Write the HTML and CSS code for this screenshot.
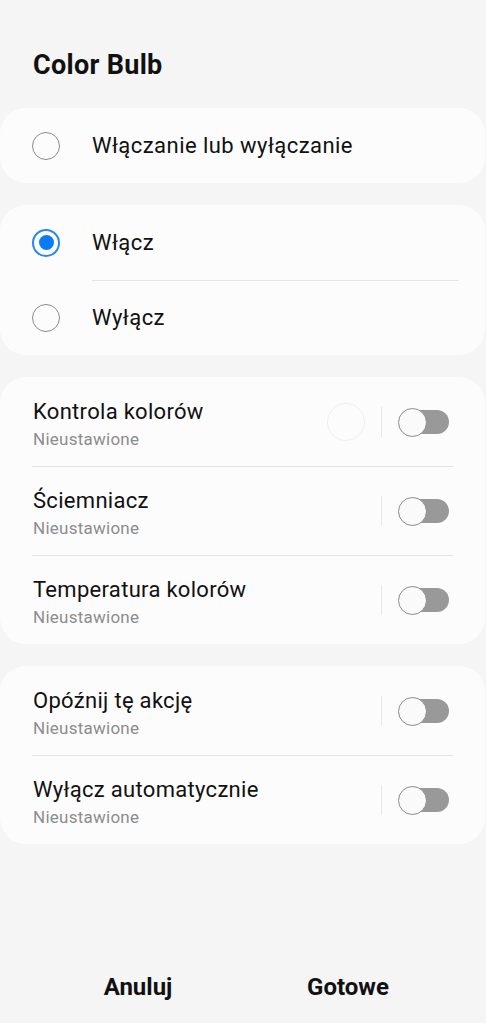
FILE: index.html
```html
<!DOCTYPE html>
<html lang="pl">
<head>
  <meta charset="UTF-8" />
  <meta name="viewport" content="width=device-width, initial-scale=1.0"/>
  <title>Color Bulb</title>
  <link rel="stylesheet" href="styles.css">
</head>
<body>
  <div class="screen">
    <h1 class="title">Color Bulb</h1>

    <div class="card">
      <label class="radio-row">
        <span class="radio"></span>
        <span class="radio-label">Włączanie lub wyłączanie</span>
      </label>
    </div>

    <div class="card">
      <label class="radio-row">
        <span class="radio checked"></span>
        <span class="radio-label">Włącz</span>
      </label>
      <label class="radio-row">
        <span class="radio"></span>
        <span class="radio-label">Wyłącz</span>
      </label>
    </div>

    <div class="card">
      <div class="setting-row">
        <div class="setting-text">
          <div class="setting-name">Kontrola kolorów</div>
          <div class="setting-value">Nieustawione</div>
        </div>
        <span class="color-dot"></span>
        <span class="v-divider"></span>
        <span class="switch"></span>
      </div>
      <div class="setting-row">
        <div class="setting-text">
          <div class="setting-name">Ściemniacz</div>
          <div class="setting-value">Nieustawione</div>
        </div>
        <span class="v-divider"></span>
        <span class="switch"></span>
      </div>
      <div class="setting-row">
        <div class="setting-text">
          <div class="setting-name">Temperatura kolorów</div>
          <div class="setting-value">Nieustawione</div>
        </div>
        <span class="v-divider"></span>
        <span class="switch"></span>
      </div>
    </div>

    <div class="card">
      <div class="setting-row">
        <div class="setting-text">
          <div class="setting-name">Opóźnij tę akcję</div>
          <div class="setting-value">Nieustawione</div>
        </div>
        <span class="v-divider"></span>
        <span class="switch"></span>
      </div>
      <div class="setting-row">
        <div class="setting-text">
          <div class="setting-name">Wyłącz automatycznie</div>
          <div class="setting-value">Nieustawione</div>
        </div>
        <span class="v-divider"></span>
        <span class="switch"></span>
      </div>
    </div>

    <div class="actions">
      <button class="action-btn">Anuluj</button>
      <button class="action-btn">Gotowe</button>
    </div>
  </div>
</body>
</html>
```

FILE: styles.css
```css
* {
  margin: 0;
  padding: 0;
  box-sizing: border-box;
}

body {
  font-family: Roboto, 'Noto Sans', sans-serif;
  background-color: #f5f5f5;
  color: #111;
}

.screen {
  height: 1023px;
  display: flex;
  flex-direction: column;
  gap: 22px;
}

.title {
  font-size: 27px;
  font-weight: 700;
  letter-spacing: 0.3px;
  line-height: 32px;
  padding: 49px 33px 5px;
  margin-bottom: -22px;
  height: 108px;
}

.card {
  background-color: #fcfcfc;
  border-radius: 26px;
  margin: 0 1px 0 0;
}

/* radio rows */
.radio-row {
  display: flex;
  align-items: center;
  height: 75px;
  padding-left: 32px;
  position: relative;
}

.radio-row + .radio-row::before {
  content: '';
  position: absolute;
  top: 0;
  left: 92px;
  right: 26px;
  border-top: 1px solid #e4e4e4;
}

.radio {
  width: 28px;
  height: 28px;
  border-radius: 50%;
  border: 1.5px solid #8c8c8c;
  flex-shrink: 0;
  position: relative;
}

.radio.checked {
  border: 2px solid #2a86f3;
}

.radio.checked::after {
  content: '';
  position: absolute;
  left: 4.5px;
  top: 4.5px;
  width: 15px;
  height: 15px;
  border-radius: 50%;
  background-color: #0b7bf5;
}

.radio-label {
  font-size: 22px;
  letter-spacing: 0.45px;
  margin-left: 32px;
}

/* setting rows */
.setting-row {
  display: flex;
  align-items: center;
  height: 89px;
  padding: 0 36px 0 33px;
  position: relative;
}

.setting-row + .setting-row::before {
  content: '';
  position: absolute;
  top: 0;
  left: 32px;
  right: 32px;
  border-top: 1px solid #e4e4e4;
}

.setting-text {
  flex: 1;
  padding-top: 6px;
}

.setting-name {
  font-size: 22px;
  letter-spacing: 0.3px;
  line-height: 26px;
}

.setting-value {
  font-size: 17px;
  letter-spacing: 0.25px;
  line-height: 22px;
  margin-top: 3px;
  color: #8c8c8c;
}

.color-dot {
  width: 38px;
  height: 38px;
  border-radius: 50%;
  border: 1px solid #efefef;
  margin-right: 16px;
}

.v-divider {
  width: 1px;
  height: 30px;
  background-color: #e8e8e8;
  margin-right: 16px;
}

.switch {
  width: 51px;
  height: 27px;
  position: relative;
}

.switch::before {
  content: '';
  position: absolute;
  left: 4px;
  right: 0;
  top: 1.5px;
  bottom: 1.5px;
  border-radius: 12px;
  background-color: #999;
}

.switch::after {
  content: '';
  position: absolute;
  left: 0;
  top: 0;
  width: 27px;
  height: 27px;
  border-radius: 50%;
  background-color: #fafafa;
  border: 1.5px solid #8a8a8a;
}

/* bottom buttons */
.actions {
  margin-top: auto;
  display: flex;
  padding: 0 33px 22px;
}

.action-btn {
  flex: 1;
  background: none;
  border: none;
  font-family: inherit;
  font-size: 24px;
  font-weight: 700;
  color: #111;
  height: 28px;
  line-height: 28px;
}
```
